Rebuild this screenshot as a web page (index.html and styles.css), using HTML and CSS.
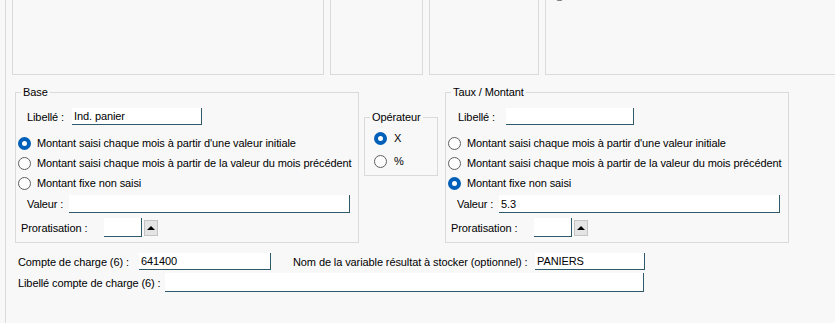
FILE: index.html
```html
<!DOCTYPE html>
<html lang="fr">
<head>
    <meta charset="UTF-8">
    <title>Variable de paie</title>
    <link rel="stylesheet" href="styles.css">
</head>
<body>
    <div class="page">
        <div class="top">
            <div class="panel p1"></div>
            <div class="panel p2"></div>
            <div class="panel p3"></div>
            <div class="panel p4"><span class="radio cut"></span></div>
        </div>

        <div class="groups">
            <fieldset class="group base">
                <legend>Base</legend>
                <div class="field libelle">
                    <label class="lbl-libelle">Libellé :</label>
                    <input class="txt w-libelle" type="text" value="Ind. panier">
                </div>
                <div class="options">
                    <div class="opt"><span class="radio on"></span>Montant saisi chaque mois à partir d'une valeur initiale</div>
                    <div class="opt"><span class="radio"></span>Montant saisi chaque mois à partir de la valeur du mois précédent</div>
                    <div class="opt"><span class="radio"></span>Montant fixe non saisi</div>
                </div>
                <div class="field valeur">
                    <label class="lbl-valeur">Valeur :</label>
                    <input class="txt w-valeur" type="text" value="">
                </div>
                <div class="field prorata">
                    <label class="lbl-prorata">Proratisation :</label>
                    <input class="txt w-prorata" type="text" value="">
                    <span class="spin"></span>
                </div>
            </fieldset>

            <fieldset class="group operateur">
                <legend>Opérateur</legend>
                <div class="opt"><span class="radio on"></span>X</div>
                <div class="opt"><span class="radio"></span>%</div>
            </fieldset>

            <fieldset class="group taux">
                <legend>Taux / Montant</legend>
                <div class="field libelle">
                    <label class="lbl-libelle">Libellé :</label>
                    <input class="txt w-libelle" type="text" value="">
                </div>
                <div class="options">
                    <div class="opt"><span class="radio"></span>Montant saisi chaque mois à partir d'une valeur initiale</div>
                    <div class="opt"><span class="radio"></span>Montant saisi chaque mois à partir de la valeur du mois précédent</div>
                    <div class="opt"><span class="radio on"></span>Montant fixe non saisi</div>
                </div>
                <div class="field valeur">
                    <label class="lbl-valeur">Valeur :</label>
                    <input class="txt w-valeur" type="text" value="5.3">
                </div>
                <div class="field prorata">
                    <label class="lbl-prorata">Proratisation :</label>
                    <input class="txt w-prorata" type="text" value="">
                    <span class="spin"></span>
                </div>
            </fieldset>
        </div>

        <div class="bottom">
            <div class="row row-compte">
                <label class="lbl-compte">Compte de charge (6) :</label>
                <input class="txt w-compte" type="text" value="641400">
                <label class="lbl-variable">Nom de la variable résultat à stocker (optionnel) :</label>
                <input class="txt w-variable" type="text" value="PANIERS">
            </div>
            <div class="row row-libcompte">
                <label class="lbl-libcompte">Libellé compte de charge (6) :</label>
                <input class="txt w-libcompte" type="text" value="">
            </div>
        </div>
    </div>
</body>
</html>
```

FILE: styles.css
```css
html, body {
    margin: 0;
    height: 100%;
}

body {
    background-color: #f8f8f8;
    font-family: "Liberation Sans", Arial, sans-serif;
    font-size: 11px;
    letter-spacing: -0.1px;
    color: #000;
    overflow: hidden;
}

.page {
    margin-left: 5px;
    border-left: 1px solid #dcdcdc;
    padding-left: 6px;
    height: 323px;
}

/* top row of panels, cut off by the window */
.top {
    display: flex;
    gap: 6px;
    height: 75px;
}
.panel {
    border: 1px solid #dadada;
    border-top: none;
    box-sizing: border-box;
    height: 75px;
    overflow: hidden;
}
.p1 { width: 312px; }
.p2 { width: 93px; }
.p3 { width: 110px; }
.p4 { flex: 1; border-right: none; }

.radio.cut {
    display: block;
    margin: -12px 0 0 7px;
}

/* group boxes */
.groups {
    display: flex;
    align-items: flex-start;
    margin-top: 10px;
    margin-left: 3px;
}
.group {
    margin: 0;
    padding: 0 0 5px 0;
    border: 1px solid #dadada;
    box-sizing: border-box;
    min-width: 0;
}
.group legend {
    padding: 0 2px;
    margin-left: 5px;
    line-height: 14px;
}
.base { width: 344px; }
.operateur {
    width: 74px;
    margin-left: 5px;
    margin-top: 25px;
    padding-bottom: 4px;
}
.taux {
    width: 344px;
    margin-left: 7px;
}

.field {
    display: flex;
    align-items: center;
}
.field label {
    flex: none;
}
.libelle {
    margin-top: 9px;
    height: 17px;
}
.lbl-libelle { width: 45px; margin-left: 11px; }
.taux .lbl-libelle { width: 48px; margin-left: 12px; }
.w-libelle { width: 130px; height: 17px; }
.taux .w-libelle { width: 128px; }

.options {
    margin-top: 8px;
}
.opt {
    display: flex;
    align-items: center;
    height: 20px;
    white-space: nowrap;
}
.opt .radio {
    margin: 0 6px 0 2px;
}

.valeur {
    margin-top: 2px;
    height: 18px;
}
.lbl-valeur { width: 42px; margin-left: 11px; }
.w-valeur { width: 281px; height: 18px; }

.prorata {
    margin-top: 5px;
    height: 19px;
}
.lbl-prorata { width: 83px; margin-left: 5px; }
.w-prorata { width: 38px; height: 19px; }

.spin {
    width: 14px;
    height: 16px;
    margin-left: 2px;
    box-sizing: border-box;
    border: 1px solid #c4c4c4;
    background-color: #e4e4e4;
    display: flex;
    align-items: center;
    justify-content: center;
}
.spin::before {
    content: "";
    border-left: 4px solid transparent;
    border-right: 4px solid transparent;
    border-bottom: 4px solid #000;
}

/* operator box */
.operateur .opt:first-of-type {
    margin-top: 4px;
}
.operateur .opt + .opt {
    margin-top: 3px;
}
.operateur .opt .radio {
    margin: 0 7px 0 9px;
}

/* radio buttons, windows style */
.radio {
    width: 13px;
    height: 13px;
    box-sizing: border-box;
    border-radius: 50%;
    border: 1px solid #5f5f5f;
    background-color: #fdfdfd;
    flex: none;
}
.radio.on {
    border: 4px solid #005fb8;
    background-color: #fff;
}

/* text fields */
.txt {
    box-sizing: border-box;
    margin: 0;
    padding: 0 2px;
    border: none;
    border-right: 1px solid #2e5a6c;
    border-bottom: 1px solid #2e5a6c;
    background-color: #fff;
    font-family: inherit;
    font-size: 11px;
    letter-spacing: -0.1px;
    color: #000;
    outline: none;
}

/* bottom rows */
.bottom {
    padding-left: 6px;
}
.row {
    display: flex;
    align-items: center;
}
.row-compte {
    margin-top: 10px;
    height: 17px;
}
.row-libcompte {
    margin-top: 3px;
    height: 19px;
}
.lbl-compte { width: 121px; }
.w-compte { width: 132px; height: 17px; }
.lbl-variable { width: 242px; margin-left: 22px; }
.w-variable { width: 110px; height: 17px; }
.lbl-libcompte { width: 147px; }
.w-libcompte { width: 479px; height: 19px; }
```
